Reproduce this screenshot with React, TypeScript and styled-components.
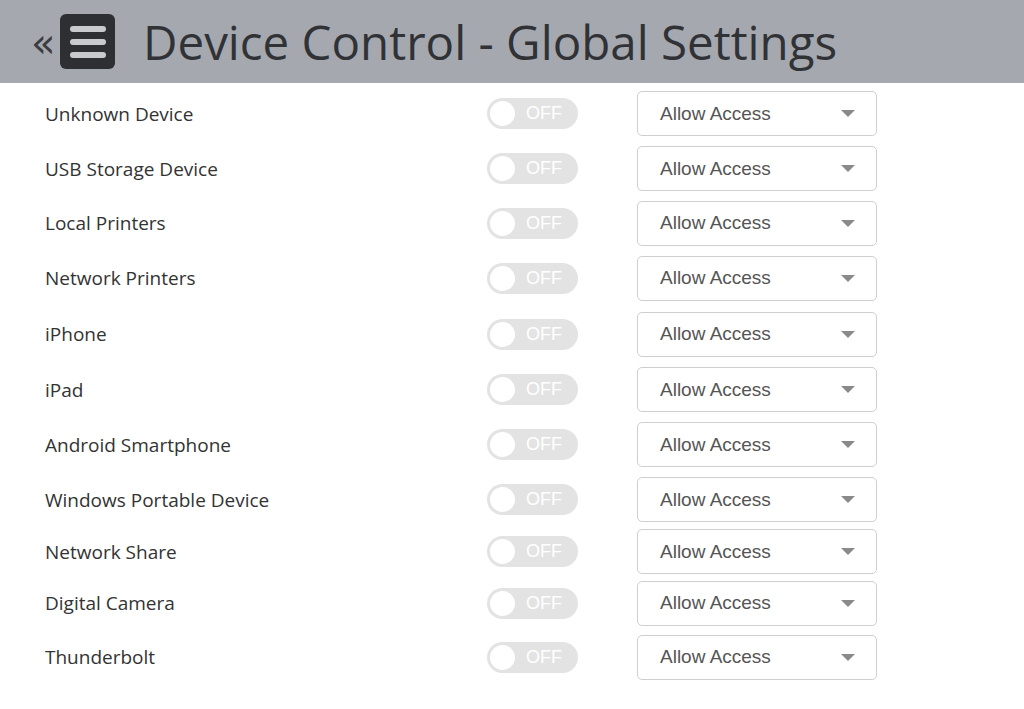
import React from 'react';
import styled, { createGlobalStyle } from 'styled-components';

const GlobalStyle = createGlobalStyle`
  body {
    margin: 0;
    background: #ffffff;
    font-family: "Open Sans", "Noto Sans", sans-serif;
  }
`;

const Header = styled.div`
  height: 83px;
  background: #a5a8af;
  display: flex;
  align-items: center;
  padding-left: 31px;
`;

const Chevrons = styled.span`
  font-family: "DejaVu Sans", sans-serif;
  font-size: 40px;
  color: #3a3c40;
  line-height: 1;
  margin-top: 2px;
  width: 29px;
`;

const MenuIcon = styled.div`
  width: 55px;
  height: 55px;
  background: #2e2f32;
  border-radius: 6px;
  display: flex;
  flex-direction: column;
  justify-content: center;
  align-items: center;
  gap: 7px;
`;

const MenuBar = styled.div`
  width: 36px;
  height: 6px;
  border-radius: 3px;
  background: #c9cacd;
`;

const Title = styled.h1`
  margin: 0 0 0 28px;
  font-family: "Open Sans", "Noto Sans", sans-serif;
  font-weight: 400;
  font-size: 47.5px;
  color: #303236;
  white-space: nowrap;
`;

const List = styled.div`
  padding-top: 3px;
`;

const Row = styled.div<{ $h: number }>`
  height: ${(p) => p.$h}px;
  display: grid;
  grid-template-columns: 442px 150px 240px;
  align-items: center;
  padding-left: 45px;
`;

const Label = styled.div`
  font-size: 19px;
  color: #333;
`;

const Toggle = styled.div`
  width: 91px;
  height: 31px;
  border-radius: 16px;
  background: #e3e3e3;
  display: flex;
  align-items: center;
  padding-left: 3px;
  box-sizing: border-box;
  gap: 11px;
`;

const Knob = styled.div`
  width: 25px;
  height: 25px;
  border-radius: 50%;
  background: #fff;
`;

const OffText = styled.span`
  color: #fff;
  font-family: "Liberation Sans", Arial, sans-serif;
  font-size: 18px;
`;

const Select = styled.div`
  width: 240px;
  height: 45px;
  box-sizing: border-box;
  border: 1.5px solid #cfcfcf;
  border-radius: 5px;
  display: flex;
  align-items: center;
  justify-content: space-between;
  padding: 0 21px 0 22px;
  background: #fff;
`;

const SelectText = styled.span`
  font-family: "Liberation Sans", Arial, sans-serif;
  font-size: 19px;
  color: #555;
`;

const Caret = styled.span`
  width: 0;
  height: 0;
  border-left: 7px solid transparent;
  border-right: 7px solid transparent;
  border-top: 7px solid #8a8a8a;
`;

const devices: [string, number][] = [
  ['Unknown Device', 55],
  ['USB Storage Device', 55],
  ['Local Printers', 54],
  ['Network Printers', 56],
  ['iPhone', 56],
  ['iPad', 55],
  ['Android Smartphone', 55],
  ['Windows Portable Device', 55],
  ['Network Share', 49],
  ['Digital Camera', 54],
  ['Thunderbolt', 54],
];

const App = () => (
  <>
    <GlobalStyle />
    <Header>
      <Chevrons>«</Chevrons>
      <MenuIcon>
        <MenuBar />
        <MenuBar />
        <MenuBar />
      </MenuIcon>
      <Title>Device Control - Global Settings</Title>
    </Header>
    <List>
      {devices.map(([name, h]) => (
        <Row key={name} $h={h}>
          <Label>{name}</Label>
          <Toggle>
            <Knob />
            <OffText>OFF</OffText>
          </Toggle>
          <Select>
            <SelectText>Allow Access</SelectText>
            <Caret />
          </Select>
        </Row>
      ))}
    </List>
  </>
);

export default App;
